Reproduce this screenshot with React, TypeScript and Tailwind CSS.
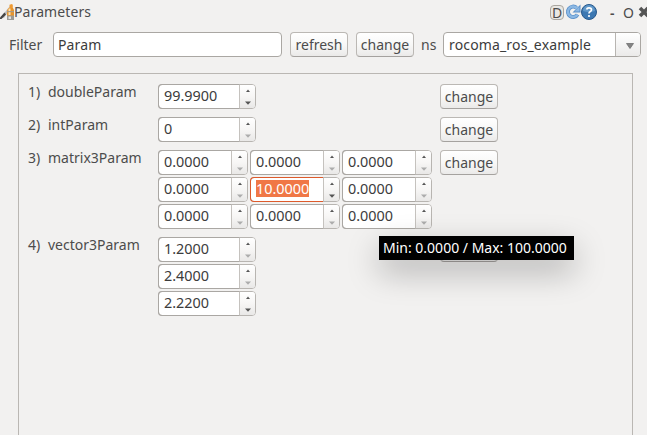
import React from "react";

type SpinProps = { value: string; width: string; downEnabled?: boolean; focused?: boolean };

function Arrow({ up, strong }: { up?: boolean; strong: boolean }) {
  return up ? (
    <svg width="6" height="4" viewBox="0 0 6 4">
      <path d="M3 0.4L5 3H1Z" fill="#555" />
    </svg>
  ) : (
    <svg width="6" height="4" viewBox="0 0 6 4">
      <path d="M0 0.6H6L3 3.8Z" fill={strong ? "#555" : "#acacac"} />
    </svg>
  );
}

function Spin({ value, width, downEnabled = false, focused = false }: SpinProps) {
  return (
    <div className={`flex h-[25px] rounded-[4px] border border-[#b8b5b1] bg-white ${width}`}>
      <div
        className={`-my-px -ml-px flex flex-1 items-center rounded-l-[4px] border border-r-0 pb-[2px] pl-[5px] text-[14.4px] leading-[17px] text-[#3c3c3c] ${
          focused ? "border-[#dd5a2c]" : "border-[#aaa7a3]"
        }`}
      >
        <span className={focused ? "bg-[#f07746] text-white" : ""}>{value}</span>
      </div>
      <div className="flex w-[16px] flex-col items-center justify-between rounded-r-[3px] border-l border-[#c5c2be] bg-gradient-to-b from-white via-[#f7f6f5] to-[#e9e8e7] pt-[4px] pb-[3px]">
        <Arrow up strong />
        <Arrow strong={downEnabled} />
      </div>
    </div>
  );
}

function Button({ label, covered = false }: { label: string; covered?: boolean }) {
  return (
    <button
      aria-label={label}
      className="flex h-[25px] w-[58px] shrink-0 items-center justify-center rounded-[4px] border border-[#bbb8b4] border-b-[#a5a29f] bg-gradient-to-b from-white via-[#f8f8f7] to-[#ebeae9] text-[14px] leading-[17px] text-[#4c4c4c]"
    >
      {covered ? null : label}
    </button>
  );
}

type RowProps = { index: number; name: string; covered?: boolean; children: React.ReactNode };

function Row({ index, name, covered, children }: RowProps) {
  return (
    <div className="flex items-start">
      <span className="w-[20px] leading-[15px]">{index})</span>
      <span className="w-[110px] leading-[15px]">{name}</span>
      <div className="w-[282px]">{children}</div>
      <Button label="change" covered={covered} />
    </div>
  );
}

export default function App() {
  return (
    <div className="relative flex h-[435px] w-[647px] flex-col overflow-hidden bg-[#f2f1f0] font-['Noto_Sans',sans-serif] text-[14px] text-[#4c4c4c]">
      <header className="flex h-[24px] shrink-0 items-center">
        <svg width="14" height="17" viewBox="0 0 14 17" className="shrink-0">
          <path d="M1 13L9.5 2.5L11 4L4 14Z" fill="#bdbdbb" />
          <path d="M0 13.5L4.5 8.5L6 10.5L1.5 15H0Z" fill="#444" />
          <path d="M9.5 0.8L12 0L12.8 1V5H9.5Z" fill="#ef9a32" />
          <path d="M8.5 4H13L14 6V16H7V6.5Z" fill="#e8942c" />
          <path d="M8.5 4.5H10.5V11H8.5Z" fill="#fbe3b4" />
          <path d="M7 7H14V8.2H7Z" fill="#a89a86" />
          <path d="M7 11.5H14V16H7Z" fill="#9c9a95" />
          <path d="M8.5 12.5H11V15H8.5Z" fill="#e3e2df" />
        </svg>
        <span className="w-[536px] shrink-0 tracking-[0.1px] leading-[20px]">Parameters</span>
        <span className="flex h-[15px] w-[14px] shrink-0 items-center justify-center rounded-[4px] border border-[#aaa69f] bg-[#e9e7e3]">D</span>
        <svg width="16" height="16" viewBox="0 0 16 16" className="ml-[1px] shrink-0">
          <path d="M12.6 10.5A5.2 5.2 0 1 1 11.5 3.8" fill="none" stroke="#5a8fc8" strokeWidth="4" />
          <path d="M15.5 0.5V8.5H7.5Z" fill="#5a8fc8" />
          <path d="M12.4 10.7A5.2 5.2 0 1 1 12.2 4.5" fill="none" stroke="#8bb8e4" strokeWidth="2.4" />
          <path d="M14.5 2.5V7.5H9.5Z" fill="#8bb8e4" />
        </svg>
        <svg width="16" height="16" viewBox="0 0 16 16" className="shrink-0">
          <circle cx="8" cy="8" r="7.5" fill="#3d78b2" stroke="#28598c" />
          <path d="M2 7A6 6 0 0 1 14 7Q8 9 2 7Z" fill="#6198c9" />
          <path d="M5.6 5.5Q6 3.8 8 3.8Q10.5 3.8 10.5 5.8Q10.5 7 9 7.8Q8 8.4 8 9.6" fill="none" stroke="#fff" strokeWidth="1.7" />
          <circle cx="8" cy="12" r="1.1" fill="#fff" />
        </svg>
        <span className="ml-[13px] w-[13px] shrink-0 font-semibold">-</span>
        <span className="w-[15px] shrink-0">O</span>
        <svg width="12" height="12" viewBox="0 0 12 12" className="shrink-0">
          <path d="M2 2L10 10M10 2L2 10" stroke="#555" strokeWidth="3.6" />
        </svg>
      </header>

      <div className="mt-[8px] flex h-[25px] shrink-0 items-center">
        <span className="ml-[9px] w-[44px]">Filter</span>
        <div className="flex h-[25px] w-[229px] items-center rounded-[4px] border border-[#aaa7a3] bg-white pl-[4px] tracking-[0.15px] text-[#3c3c3c]">Param</div>
        <div className="ml-[8px] flex gap-2">
          <Button label="refresh" />
          <Button label="change" />
        </div>
        <span className="ml-[7px] w-[22px]">ns</span>
        <div className="flex h-[25px] w-[198px] rounded-[4px] border border-[#aaa7a3] bg-white text-[#3c3c3c]">
          <span className="flex flex-1 items-center pl-[5px] tracking-[0.15px]">rocoma_ros_example</span>
          <div className="flex w-[25px] items-center justify-center rounded-r-[3px] border-l border-[#b8b5b1] bg-gradient-to-b from-white to-[#ebeae9]">
            <svg width="8" height="6" viewBox="0 0 8 6" className="mt-[3px] ml-[3px]">
              <path d="M0.5 0.5H7.5L4 5.5Z" fill="#858585" stroke="#666" strokeWidth="0.7" />
            </svg>
          </div>
        </div>
      </div>

      <main className="mt-[16px] ml-[18px] flex w-[615px] flex-1 flex-col gap-2 border border-b-0 border-[#bab7b3] pt-[10px] pl-[9px]">
        <Row index={1} name="doubleParam">
          <Spin value="99.9900" width="w-[98px]" downEnabled />
        </Row>
        <Row index={2} name="intParam">
          <Spin value="0" width="w-[98px]" />
        </Row>
        <Row index={3} name="matrix3Param">
          <div className="grid grid-cols-[90px_90px_90px] gap-[2px]">
            {Array.from({ length: 9 }, (_, i) => (
              <Spin key={i} value={i === 4 ? "10.0000" : "0.0000"} width="w-[90px]" focused={i === 4} downEnabled={i === 4} />
            ))}
          </div>
        </Row>
        <Row index={4} name="vector3Param" covered>
          <div className="flex flex-col gap-[2px]">
            <Spin value="1.2000" width="w-[98px]" />
            <Spin value="2.4000" width="w-[98px]" />
            <Spin value="2.2200" width="w-[98px]" downEnabled />
          </div>
        </Row>
      </main>

      <div className="absolute top-[236px] left-[379px] flex h-[24px] w-[195px] items-center bg-black pb-[2px] pl-[4px] text-[14px] whitespace-nowrap text-white shadow-[0_12px_32px_0px_rgba(0,0,0,0.27)]">
        Min: 0.0000 / Max: 100.0000
      </div>
    </div>
  );
}
